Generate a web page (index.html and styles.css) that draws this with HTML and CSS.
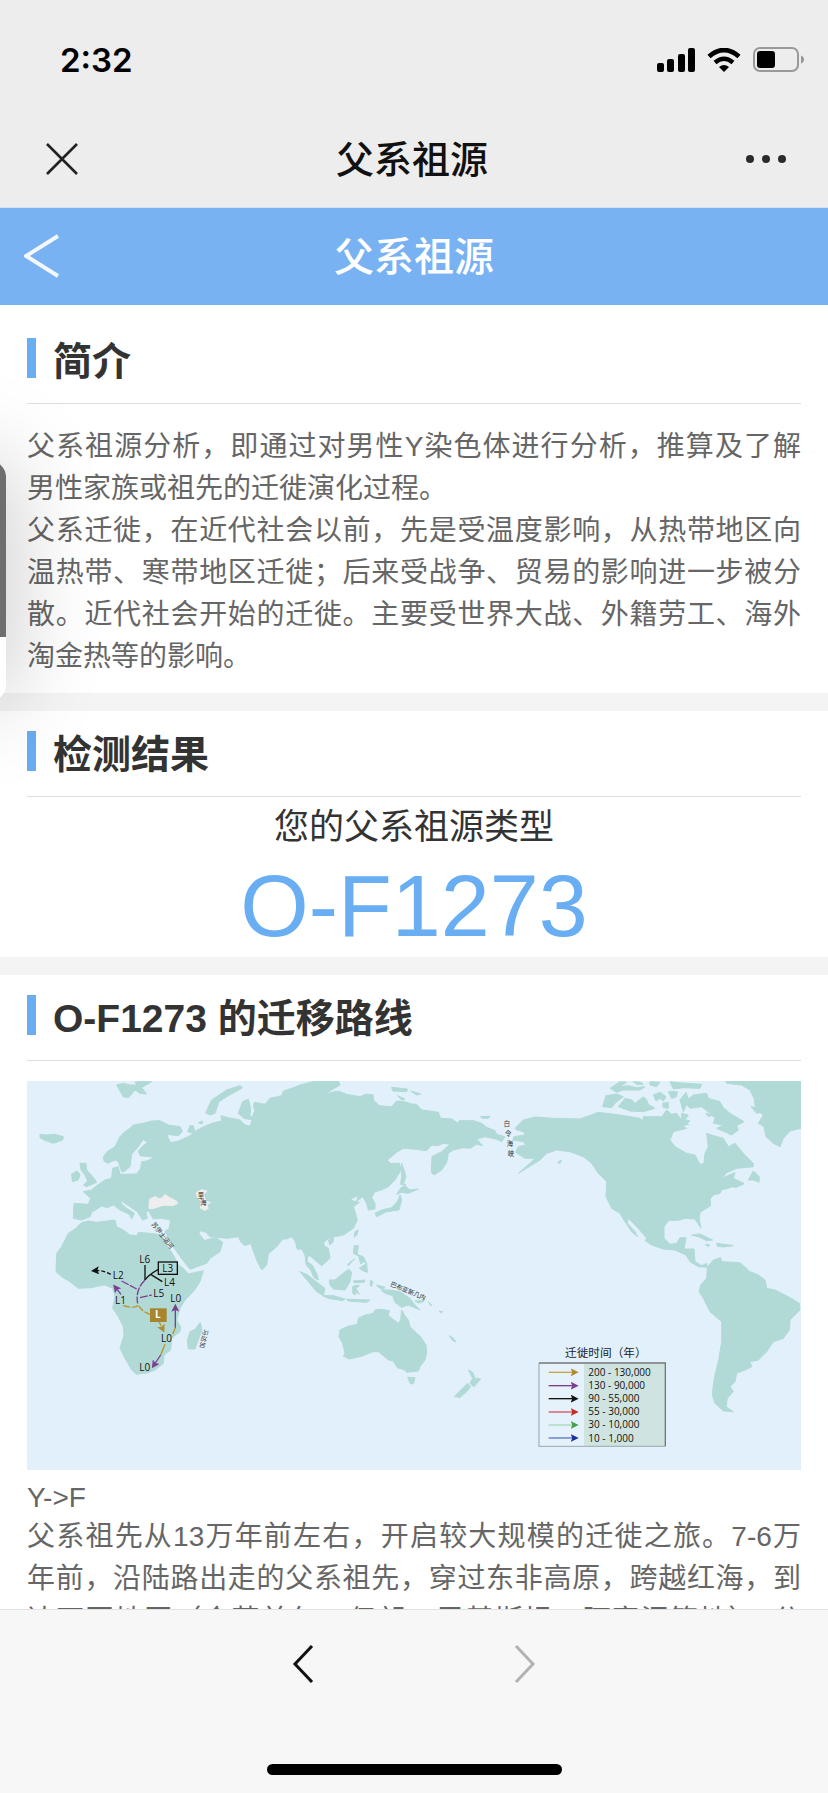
FILE: index.html
```html
<!DOCTYPE html>
<html lang="zh-CN">
<head>
  <meta charset="UTF-8">
  <meta name="viewport" content="width=device-width, initial-scale=1">
  <title>父系祖源</title>
  <link rel="stylesheet" href="styles.css">
</head>
<body>

  <header class="app-bar">
    <div class="status-bar">
      <span class="time">2:32</span>
      <div class="status-icons">
        <svg width="38" height="24" viewBox="0 0 38 24">
          <rect x="0" y="15" width="7" height="9" rx="2"/>
          <rect x="10" y="11" width="7" height="13" rx="2"/>
          <rect x="21" y="6" width="7" height="18" rx="2"/>
          <rect x="31" y="0" width="7" height="24" rx="2"/>
        </svg>
        <svg width="34" height="24" viewBox="0 0 34 24">
          <path d="M17 24 L12 19 Q17 15 22 19 Z"/>
          <path d="M8 14.5 Q17 7 26 14.5" fill="none" stroke="#000" stroke-width="4.4"/>
          <path d="M2 8.5 Q17 -4.5 32 8.5" fill="none" stroke="#000" stroke-width="4.6"/>
        </svg>
        <svg width="51" height="26" viewBox="0 0 51 26">
          <rect x="1" y="1" width="44" height="23" rx="6" fill="none" stroke="#999" stroke-width="2"/>
          <rect x="4" y="4" width="18" height="17" rx="3"/>
          <path d="M48 8.5 Q51 9.5 51 12.500 Q51 15.500 48 16.500 Z" fill="#999"/>
        </svg>
      </div>
    </div>
    <div class="title-bar">
      <button class="icon-button" aria-label="关闭">
        <svg width="32" height="32" viewBox="0 0 32 32">
          <path d="M1 1 L31 31 M31 1 L1 31" fill="none" stroke="#222" stroke-width="2.6"/>
        </svg>
      </button>
      <span class="app-title">父系祖源</span>
      <button class="icon-button" aria-label="更多">
        <svg width="40" height="8" viewBox="0 0 40 8" fill="#2a2a2a">
          <circle cx="4" cy="4" r="4"/>
          <circle cx="20" cy="4" r="4"/>
          <circle cx="36" cy="4" r="4"/>
        </svg>
      </button>
    </div>
  </header>

  <nav class="page-bar">
    <a href="#" class="page-back" aria-label="返回">
      <svg width="36" height="44" viewBox="0 0 36 44">
        <path d="M34 2 L2 22 L34 42" fill="none" stroke="#fff" stroke-opacity="0.9" stroke-width="4"/>
      </svg>
    </a>
    <h1>父系祖源</h1>
  </nav>

  <main class="content">
    <section class="card intro">
      <h2>简介</h2>
      <div class="text intro-text">
        <p>父系祖源分析，即通过对男性Y染色体进行分析，推算及了解男性家族或祖先的迁徙演化过程。</p>
        <p>父系迁徙，在近代社会以前，先是受温度影响，从热带地区向温热带、寒带地区迁徙；后来受战争、贸易的影响进一步被分散。近代社会开始的迁徙。主要受世界大战、外籍劳工、海外淘金热等的影响。</p>
      </div>
    </section>

    <section class="card">
      <h2>检测结果</h2>
      <p class="result-label">您的父系祖源类型</p>
      <p class="result-value">O-F1273</p>
    </section>

    <section class="card">
      <h2>O-F1273 的迁移路线</h2>
      <svg class="map" viewBox="21 18 2322 1167" role="img" aria-label="迁移路线图">
        <defs>
          <marker id="purple" viewBox="0 0 10 10" refX="5" refY="5" markerWidth="24" markerHeight="24" markerUnits="userSpaceOnUse" orient="auto"><path d="M0 0 L10 5 L0 10 L2 5 Z" fill="#7b3f8f"/></marker>
          <marker id="gold" viewBox="0 0 10 10" refX="5" refY="5" markerWidth="24" markerHeight="24" markerUnits="userSpaceOnUse" orient="auto"><path d="M0 0 L10 5 L0 10 L2 5 Z" fill="#b08a2e"/></marker>
          <marker id="black" viewBox="0 0 10 10" refX="5" refY="5" markerWidth="24" markerHeight="24" markerUnits="userSpaceOnUse" orient="auto"><path d="M0 0 L10 5 L0 10 L2 5 Z" fill="#111"/></marker>
          <marker id="red" viewBox="0 0 10 10" refX="5" refY="5" markerWidth="24" markerHeight="24" markerUnits="userSpaceOnUse" orient="auto"><path d="M0 0 L10 5 L0 10 L2 5 Z" fill="#c62828"/></marker>
          <marker id="green" viewBox="0 0 10 10" refX="5" refY="5" markerWidth="24" markerHeight="24" markerUnits="userSpaceOnUse" orient="auto"><path d="M0 0 L10 5 L0 10 L2 5 Z" fill="#43a047"/></marker>
          <marker id="blue" viewBox="0 0 10 10" refX="5" refY="5" markerWidth="24" markerHeight="24" markerUnits="userSpaceOnUse" orient="auto"><path d="M0 0 L10 5 L0 10 L2 5 Z" fill="#1a2f9a"/></marker>
        </defs>

        <rect x="21" y="18" width="2322" height="1167" fill="#e1f0fa"/>

        <g class="land">
          <!-- Europe and Asia -->
          <path d="M250 245 L262 230 285 215 300 185 312 172 330 160 340 150 370 145 395 138 420 137 445 150 480 155 487 170 475 182 440 178 445 190 452 203 475 198 505 185 520 175 503 170 510 152 520 152 524 170 545 158 575 145 605 138 603 122 625 128 660 135 675 150 690 153 697 135 672 130 655 115 668 80 685 73 692 100 690 125 697 125 705 105 700 95 703 82 735 88 750 70 785 62 790 48 815 40 840 30 885 18 955 18 960 30 940 42 915 57 955 48 980 58 1020 65 1040 57 1060 60 1060 75 1078 92 1115 95 1130 78 1155 80 1175 87 1190 88 1205 105 1230 108 1255 112 1262 130 1295 132 1315 145 1318 137 1360 137 1385 145 1400 157 1425 167 1430 178 1455 185 1445 200 1430 193 1395 185 1370 192 1388 212 1370 208 1350 220 1330 218 1300 225 1285 235 1280 262 1265 285 1242 300 1234 292 1236 245 1265 230 1290 208 1270 205 1255 212 1235 210 1220 227 1180 222 1150 220 1130 232 1102 255 1110 265 1138 265 1143 285 1125 315 1105 335 1085 345 1065 350 1055 368 1065 385 1065 402 1045 405 1040 385 1028 365 1010 378 1015 362 990 372 1000 378 1018 382 1000 395 1005 410 1012 435 1000 460 970 480 930 488 912 500 912 512 925 520 930 550 905 572 890 560 870 542 862 545 862 560 878 572 892 600 895 615 882 608 872 585 858 568 855 540 845 522 832 523 826 500 815 485 800 492 788 492 770 515 745 537 740 570 725 585 710 555 697 520 693 505 675 512 662 500 655 485 620 490 570 485 558 472 540 467 537 475 553 497 575 490 590 490 608 502 600 530 570 550 560 565 510 583 492 560 470 530 445 490 435 468 447 462 452 435 425 430 400 432 385 407 378 412 382 430 368 435 352 410 330 395 303 377 303 385 320 400 343 415 335 432 328 418 300 405 280 390 262 398 245 393 215 412 210 425 185 435 160 430 162 385 205 388 212 370 190 350 215 345 230 332 255 315 275 310 278 280 295 275 300 298 350 297 362 280 365 260 380 258 405 247 360 242 355 228 368 213 382 203 370 193 355 215 335 238 330 275 312 290 305 290 295 260 285 255 262 265 252 258Z"/>
          <!-- Africa and Madagascar -->
          <path d="M185 443 L205 438 230 442 285 435 290 455 310 465 330 480 350 482 355 472 400 476 425 480 437 505 460 540 475 570 490 580 505 597 550 587 540 620 520 650 495 675 480 700 470 735 482 755 480 770 455 790 452 825 432 840 430 865 405 885 385 893 350 898 335 885 315 850 300 820 312 780 310 755 295 725 278 700 285 665 278 640 255 630 235 633 215 638 175 640 150 620 125 605 108 590 110 535 125 515 145 475 165 462Z"/>
          <path d="M541 742 L546 765 525 822 505 822 502 795 510 770 525 763Z"/>
          <!-- European islands -->
          <path d="M60 178 L80 180 105 178 130 185 128 195 100 205 72 195 60 188Z M180 265 L198 265 200 285 218 305 230 322 200 335 190 330 203 318 195 300 183 285Z M155 297 L170 288 180 297 175 315 157 320Z M290 30 L310 25 330 30 350 30 345 20 395 20 365 38 380 57 360 55 345 45 325 68 310 65Z M557 113 L575 75 620 45 660 32 668 38 620 65 597 80 585 115 570 120Z M535 143 L547 138 547 147Z"/>
          <!-- Arctic and Pacific islands of Asia -->
          <path d="M1115 37 L1162 42 1160 50 1118 48Z M1172 48 L1202 57 1190 60Z M1133 62 L1155 72 1145 75Z M1382 125 L1410 124 1405 130 1385 129Z M1145 265 L1152 285 1158 305 1150 325 1158 330 1142 328 1145 305Z M1143 338 L1155 332 1170 345 1195 342 1165 355 1145 352 1130 358Z M1140 360 L1145 375 1137 405 1100 410 1070 425 1065 415 1085 405 1115 398 1132 380Z M1005 470 L1015 465 1010 480 1003 487Z M925 495 L940 487 940 500 930 510Z"/>
          <!-- South east Asia -->
          <path d="M1003 512 L1015 512 1012 535 1020 545 1000 535Z M1015 540 L1030 545 1040 565 1030 560 1022 567Z M1005 550 L985 572 983 568Z M1018 580 L1040 565 1042 592 1030 588Z M840 590 L860 598 895 625 915 640 910 662 890 650 865 620Z M928 615 L945 615 975 590 987 583 995 592 990 620 975 645 940 642 930 630Z M908 662 L940 662 975 672 968 677 925 670Z M980 673 L1050 675 1040 682 985 678Z M998 635 L1010 630 1018 632 1008 640 1018 657 1010 652 1005 660 998 655Z M1000 618 L1035 615 1032 622 1002 623Z M1052 615 L1058 620 1055 635 1050 630Z M1070 630 L1095 637 1090 643 1075 637Z M1083 645 L1110 645 1140 650 1170 670 1185 690 1200 705 1165 690 1145 697 1125 682 1118 662 1095 655Z M1185 677 L1205 678 1212 668 1210 680 1195 684Z M1225 680 L1235 690 1232 692Z M1258 708 L1268 710 1262 714Z M1288 782 L1300 790 1308 800 1298 797Z"/>
          <!-- Australia and New Zealand -->
          <path d="M960 765 L980 755 1012 748 1015 730 1035 720 1060 715 1065 705 1085 703 1108 707 1105 722 1135 745 1142 735 1145 705 1155 722 1165 735 1170 755 1190 775 1202 785 1218 810 1220 835 1215 855 1200 875 1195 888 1160 892 1155 885 1132 878 1120 858 1105 855 1100 850 1075 830 1060 830 1020 845 988 852 970 843 975 835 968 805 957 785Z M1163 907 L1185 908 1180 927 1170 925Z M1345 885 L1358 892 1365 910 1382 912 1362 935 1350 925 1358 910Z M1343 925 L1352 935 1340 950 1320 967 1303 965 1315 952Z"/>
          <!-- North America -->
          <path d="M1485 160 L1510 135 1545 126 1600 130 1680 132 1735 112 1800 120 1860 130 1868 138 1870 125 1925 125 1940 105 1955 118 1970 115 1980 130 2010 138 1990 155 2000 160 1960 170 1950 195 1965 215 2000 235 2025 240 2040 268 2052 265 2055 235 2065 215 2060 175 2080 182 2110 190 2125 215 2145 205 2170 235 2185 250 2200 265 2200 275 2150 280 2120 293 2105 310 2145 293 2140 310 2160 320 2172 325 2140 335 2105 345 2100 355 2080 360 2070 372 2072 392 2040 412 2038 435 2043 460 2025 432 1995 430 1980 435 1945 437 1932 455 1932 490 1950 508 1970 505 1980 488 1998 488 1992 522 2022 522 2025 560 2045 572 2060 565 2062 577 2035 575 2010 560 1998 540 1965 525 1930 522 1895 510 1875 497 1880 490 1855 460 1825 430 1822 445 1845 470 1853 485 1835 470 1812 435 1800 415 1775 400 1758 365 1760 320 1735 295 1715 265 1690 245 1650 230 1610 225 1580 235 1560 255 1495 295 1530 265 1545 250 1515 250 1487 232 1495 215 1518 210 1510 200 1478 195 1482 185 1515 180 1510 170 1490 165Z"/>
          <!-- Arctic Canada and Greenland -->
          <path d="M1758 62 L1790 57 1810 65 1785 85 1775 98 1748 95Z M1795 95 L1815 70 1835 75 1845 85 1870 65 1880 75 1885 88 1905 100 1870 110 1830 108Z M1770 40 L1800 20 1820 22 1800 35 1825 32 1850 38 1875 35 1860 45 1810 45 1790 52Z M1840 20 L1862 22 1870 28 1850 28Z M1900 60 L1920 52 1938 65 1930 78 1920 70 1908 78Z M1945 50 L1972 50 1970 65 1955 70Z M1950 20 L1985 24 2045 28 2040 40 1990 38 1960 42Z M1890 20 L1920 22 1910 35 1890 30Z M1928 85 L1945 82 1945 100 1930 98Z M1980 75 L1998 52 2005 72 2020 60 2060 55 2065 70 2100 80 2110 98 2130 115 2172 140 2150 152 2155 165 2135 180 2090 160 2110 150 2080 145 2085 130 2070 115 2045 95 2010 100 2000 88 1990 110Z M1985 115 L2005 120 1995 135 2005 150 1985 145Z M2058 115 L2078 120 2065 125Z M2117 18 L2343 18 2343 160 2310 168 2290 190 2280 215 2260 205 2238 185 2232 155 2215 145 2230 120 2210 105 2205 90 2202 70 2190 45 2165 30 2120 25Z M2193 95 L2215 98 2235 110 2210 115Z M2185 315 L2200 288 2218 305 2217 322 2200 315Z M2135 328 L2162 322 2170 328 2145 338Z M1613 262 L1625 255 1620 265Z M1735 295 L1762 308 1770 318 1752 310Z"/>
          <!-- Caribbean and South America -->
          <path d="M2015 480 L2040 477 2078 495 2060 497 2040 487Z M2090 505 L2140 512 2110 516 2092 514Z M2055 508 L2070 510 2065 515Z M2062 577 L2080 555 2102 548 2105 560 2160 563 2190 590 2215 600 2235 615 2240 640 2265 645 2310 668 2338 685 2340 705 2310 735 2308 765 2290 790 2260 800 2240 830 2215 855 2190 860 2195 875 2175 885 2150 895 2145 920 2130 935 2140 950 2122 970 2118 995 2140 1010 2110 1008 2085 985 2077 960 2080 930 2085 900 2097 850 2105 800 2105 740 2070 710 2050 670 2037 650 2042 630 2060 610Z"/>
        </g>

        <g fill="#eee">
          <path d="M385 395 L388 372 405 363 418 370 425 368 435 357 447 365 470 377 475 385 460 393 430 392 400 402 387 402Z"/>
          <path d="M528 352 L545 343 563 347 552 360 560 378 575 382 562 390 567 400 555 408 540 400 542 380 530 365Z"/>
        </g>

        <!-- routes -->
        <g class="route">
          <path d="M272 598 Q250 585 225 587" stroke="#111" stroke-dasharray="12 6" marker-end="url(#black)"/>
          <path d="M375 570 V615" stroke="#111"/>
          <path d="M415 583 Q385 600 375 615 M392 598 L427 620" stroke="#111"/>
          <path d="M375 615 Q345 645 353 685 M305 618 L350 642 M360 668 L395 660" stroke="#7b3f8f" stroke-dasharray="24 4"/>
          <path d="M303 658 L287 638" stroke="#7b3f8f" marker-end="url(#purple)"/>
          <path d="M310 692 Q345 702 355 690 Q365 710 390 718 M415 735 L428 762" stroke="#b8962f" stroke-dasharray="20 5" marker-end="url(#gold)"/>
          <path d="M458 778 L466 758 M435 808 L422 840" stroke="#b8962f"/>
          <path d="M466 758 V698" stroke="#7b3f8f" marker-end="url(#purple)"/>
          <path d="M422 840 L402 870" stroke="#7b3f8f" marker-end="url(#purple)"/>
        </g>
        <rect x="415" y="561" width="57" height="37" fill="none" stroke="#111" stroke-width="4"/>
        <rect x="390" y="700" width="50" height="41" fill="#a8842c"/>

        <g class="map-label">
          <text x="278" y="612">L2</text>
          <text x="358" y="564">L6</text>
          <text x="427" y="590">L3</text>
          <text x="432" y="634">L4</text>
          <text x="400" y="667">L5</text>
          <text x="285" y="687">L1</text>
          <text x="451" y="681">L0</text>
          <text x="423" y="802">L0</text>
          <text x="358" y="888">L0</text>
          <text x="405" y="730" class="origin">L</text>
        </g>
        <g class="sea-label">
          <text transform="translate(393 448) rotate(52)">苏伊士运河</text>
          <text><tspan x="533" y="370">里</tspan><tspan x="541" y="389">海</tspan></text>
          <text><tspan x="1451" y="153">白</tspan><tspan x="1455" y="183">令</tspan><tspan x="1460" y="214">海</tspan><tspan x="1463" y="244">峡</tspan></text>
          <text transform="translate(1109 632) rotate(23)">巴布亚新几内</text>
          <text transform="translate(551 762) rotate(102)">马达加</text>
        </g>

        <!-- legend -->
        <rect x="1557" y="864" width="379" height="250" fill="#e6f2fb"/>
        <rect x="1692" y="864" width="244" height="250" fill="#cfe3e0"/>
        <path d="M1557 864 V1114 H1936" fill="none" stroke="#aab4bc" stroke-width="4"/>
        <path d="M1557 864 H1936 V1114" fill="none" stroke="#777" stroke-width="4"/>
        <text x="1635" y="845" class="legend-title">迁徙时间（年）</text>
        <g class="route">
          <path d="M1586 892 H1664" stroke="#c5a547" marker-end="url(#gold)"/>
          <path d="M1586 932 H1664" stroke="#7b3f8f" marker-end="url(#purple)"/>
          <path d="M1586 971 H1664" stroke="#111" marker-end="url(#black)"/>
          <path d="M1586 1011 H1664" stroke="#d0525c" marker-end="url(#red)"/>
          <path d="M1586 1050 H1664" stroke="#a5d8b8" marker-end="url(#green)"/>
          <path d="M1586 1089 H1664" stroke="#5a78c0" marker-end="url(#blue)"/>
        </g>
        <g class="map-label">
          <text x="1705" y="903">200 - 130,000</text>
          <text x="1705" y="942">130 - 90,000</text>
          <text x="1705" y="982">90 - 55,000</text>
          <text x="1705" y="1021">55 - 30,000</text>
          <text x="1705" y="1060">30 - 10,000</text>
          <text x="1705" y="1100">10 - 1,000</text>
        </g>
      </svg>
      <div class="text">
        <p class="route-name">Y-&gt;F</p>
        <p class="route-text">父系祖先从13万年前左右，开启较大规模的迁徙之旅。7-6万<br>年前，沿陆路出走的父系祖先，穿过东非高原，跨越红海，到<br>达西亚地区（含苏美尔、伊朗、巴基斯坦、阿富汗等地），分</p>
      </div>
    </section>

    <div class="side-panel"></div>
  </main>

  <footer class="bottom-bar">
    <div class="history">
      <button class="icon-button" aria-label="后退">
        <svg width="22" height="38" viewBox="0 0 22 38">
          <path d="M20 1 L3 19 L20 37" fill="none" stroke="#111" stroke-width="3"/>
        </svg>
      </button>
      <button class="icon-button" aria-label="前进" disabled>
        <svg width="22" height="38" viewBox="0 0 22 38">
          <path d="M2 1 L19 19 L2 37" fill="none" stroke="#b2b2b2" stroke-width="3"/>
        </svg>
      </button>
    </div>
    <div class="home-indicator"></div>
  </footer>

</body>
</html>
```
FILE: styles.css
```css
* {
  box-sizing: border-box;
}

body {
  font-family: "Liberation Sans", "Noto Sans CJK SC", sans-serif;
  background-color: #fff;
  color: #333;
  margin: 0;
  height: 100vh;
  display: flex;
  flex-direction: column;
  overflow: hidden;
}

h1, h2, p {
  margin: 0;
}

svg {
  display: block;
}

.icon-button {
  background: none;
  border: none;
  padding: 0;
}

/* top bars */
.app-bar {
  background-color: #ededed;
  border-bottom: 1px solid #d8e0ea;
}

.status-bar {
  display: flex;
  justify-content: space-between;
  align-items: center;
  height: 112px;
  padding: 8px 24px 0 60px;
}

.time {
  font-family: Inter, sans-serif;
  font-size: 33px;
  font-weight: 600;
  color: #000;
}

.status-icons {
  display: flex;
  align-items: center;
  gap: 12px;
}

.title-bar {
  display: flex;
  justify-content: space-between;
  align-items: center;
  height: 95px;
  padding: 0 42px 2px 46px;
}

.app-title {
  padding-bottom: 4px;
  font-size: 38px;
  font-weight: 500;
  color: #111;
}

.page-bar {
  display: grid;
  grid-template-columns: 1fr auto 1fr;
  align-items: center;
  height: 97px;
  padding: 0 24px 2px;
  background-color: #78b2f2;
}

h1 {
  padding-bottom: 4px;
  color: #fff;
  font-size: 40px;
  font-weight: 500;
}

/* sections */
.content {
  position: relative;
  flex: 1;
  min-height: 0;
  overflow: hidden;
}

.card {
  padding: 20px 27px 0;
  border-bottom: 18px solid #f4f4f4;
}

.intro {
  padding-top: 33px;
}

h2 {
  display: flex;
  gap: 17px;
  padding-bottom: 17px;
  border-bottom: 1px solid #ddd;
  font-size: 39px;
  line-height: 48px;
  font-weight: bold;
}

h2::before {
  content: "";
  width: 9px;
  height: 40px;
  background-color: #69adf2;
}

.text {
  color: #666;
  font-size: 28px;
  line-height: 42px;
  text-align: justify;
}

.intro-text {
  padding: 22px 0 15px;
}

.result-label {
  padding-top: 2px;
  font-size: 35px;
  line-height: 56px;
  text-align: center;
}

.result-value {
  color: #69adf2;
  font-size: 88px;
  line-height: 102px;
  text-align: center;
}

.route-name {
  line-height: 36px;
}

.route-text {
  text-align-last: justify;
}

/* map */
.map {
  width: 100%;
  margin: 20px 0 10px;
}

.land {
  fill: #b1dad7;
  stroke: #b1dad7;
  stroke-width: 3px;
  stroke-linejoin: round;
}

.route {
  fill: none;
  stroke-width: 4px;
}

.map-label {
  font-family: "Open Sans", sans-serif;
  font-size: 30px;
  fill: #111;
}

.origin {
  fill: #fff;
  font-weight: bold;
}

.legend-title {
  font-size: 35px;
  fill: #222;
}

.sea-label {
  font-size: 19px;
  fill: #333;
}

.side-panel {
  position: absolute;
  top: 156px;
  left: -60px;
  width: 66px;
  height: 240px;
  border-radius: 16px;
  background: linear-gradient(#6e6e6e 176px, #fff 176px);
  box-shadow: 0 0 90px rgba(0, 0, 0, 0.25);
}

/* bottom bar */
.bottom-bar {
  display: flex;
  flex-direction: column;
  justify-content: space-between;
  align-items: center;
  height: 184px;
  padding: 35px 0 18px;
  background-color: #f7f7f7;
  border-top: 1px solid #e2e2e2;
}

.history {
  display: flex;
  gap: 200px;
}

.home-indicator {
  width: 295px;
  height: 11px;
  border-radius: 6px;
  background-color: #000;
}
```
